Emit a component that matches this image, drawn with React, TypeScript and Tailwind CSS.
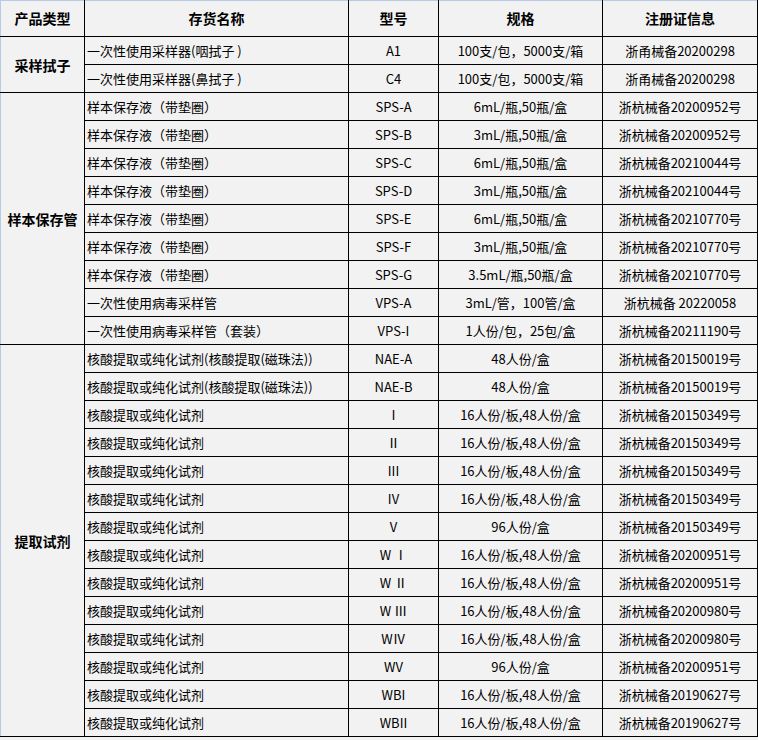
import React from 'react';

type Row = { name: string; model: string; spec: string; cert: string };
type Group = { type: string; rows: Row[] };

const swab = '一次性使用采样器';
const tube = '样本保存液（带垫圈）';
const reagent = '核酸提取或纯化试剂';
const plate = '16人份/板,48人份/盒';

const groups: Group[] = [
  {
    type: '采样拭子',
    rows: [
      { name: `${swab}(咽拭子 )`, model: 'A1', spec: '100支/包，5000支/箱', cert: '浙甬械备20200298' },
      { name: `${swab}(鼻拭子 )`, model: 'C4', spec: '100支/包，5000支/箱', cert: '浙甬械备20200298' },
    ],
  },
  {
    type: '样本保存管',
    rows: [
      { name: tube, model: 'SPS-A', spec: '6mL/瓶,50瓶/盒', cert: '浙杭械备20200952号' },
      { name: tube, model: 'SPS-B', spec: '3mL/瓶,50瓶/盒', cert: '浙杭械备20200952号' },
      { name: tube, model: 'SPS-C', spec: '6mL/瓶,50瓶/盒', cert: '浙杭械备20210044号' },
      { name: tube, model: 'SPS-D', spec: '3mL/瓶,50瓶/盒', cert: '浙杭械备20210044号' },
      { name: tube, model: 'SPS-E', spec: '6mL/瓶,50瓶/盒', cert: '浙杭械备20210770号' },
      { name: tube, model: 'SPS-F', spec: '3mL/瓶,50瓶/盒', cert: '浙杭械备20210770号' },
      { name: tube, model: 'SPS-G', spec: '3.5mL/瓶,50瓶/盒', cert: '浙杭械备20210770号' },
      { name: '一次性使用病毒采样管', model: 'VPS-A', spec: '3mL/管，100管/盒', cert: '浙杭械备 20220058' },
      { name: '一次性使用病毒采样管（套装）', model: 'VPS-I', spec: '1人份/包，25包/盒', cert: '浙杭械备20211190号' },
    ],
  },
  {
    type: '提取试剂',
    rows: [
      { name: `${reagent}(核酸提取(磁珠法))`, model: 'NAE-A', spec: '48人份/盒', cert: '浙杭械备20150019号' },
      { name: `${reagent}(核酸提取(磁珠法))`, model: 'NAE-B', spec: '48人份/盒', cert: '浙杭械备20150019号' },
      { name: reagent, model: 'Ⅰ', spec: plate, cert: '浙杭械备20150349号' },
      { name: reagent, model: 'Ⅱ', spec: plate, cert: '浙杭械备20150349号' },
      { name: reagent, model: 'III', spec: plate, cert: '浙杭械备20150349号' },
      { name: reagent, model: 'IV', spec: plate, cert: '浙杭械备20150349号' },
      { name: reagent, model: 'V', spec: '96人份/盒', cert: '浙杭械备20150349号' },
      { name: reagent, model: 'W Ⅰ', spec: plate, cert: '浙杭械备20200951号' },
      { name: reagent, model: 'W Ⅱ', spec: plate, cert: '浙杭械备20200951号' },
      { name: reagent, model: 'W Ⅲ', spec: plate, cert: '浙杭械备20200980号' },
      { name: reagent, model: 'WⅣ', spec: plate, cert: '浙杭械备20200980号' },
      { name: reagent, model: 'WV', spec: '96人份/盒', cert: '浙杭械备20200951号' },
      { name: reagent, model: 'WBI', spec: plate, cert: '浙杭械备20190627号' },
      { name: reagent, model: 'WBII', spec: plate, cert: '浙杭械备20190627号' },
    ],
  },
];

const headers = ['产品类型', '存货名称', '型号', '规格', '注册证信息'];

export default function App() {
  return (
    <div
      className="w-[758px] h-[740px] bg-[#f2f2f2] text-black overflow-hidden"
      style={{ fontFamily: '"Noto Sans CJK SC", "Noto Sans", sans-serif' }}
    >
      <table className="table-fixed border-collapse w-[757px]">
        <colgroup>
          <col className="w-[84px]" />
          <col className="w-[264px]" />
          <col className="w-[90px]" />
          <col className="w-[164px]" />
          <col className="w-[155px]" />
        </colgroup>
        <thead>
          <tr className="h-[36px]">
            {headers.map((h, i) => (
              <th
                key={h}
                className={`text-[14px] font-bold text-center border border-black border-t-[#b7cbe6] ${
                  i === 0 ? 'border-l-[#b7cbe6]' : ''
                }`}
              >
                {h}
              </th>
            ))}
          </tr>
        </thead>
        <tbody>
          {groups.map(group =>
            group.rows.map((row, idx) => (
              <tr key={`${group.type}-${idx}`} className="h-[28px] text-[13px] leading-none">
                {idx === 0 && (
                  <td
                    rowSpan={group.rows.length}
                    className="border border-black border-l-[#b7cbe6] text-[14px] font-bold text-center"
                  >
                    {group.type}
                  </td>
                )}
                <td className="border border-black px-[2px] whitespace-nowrap">{row.name}</td>
                <td className="border border-black text-center">{row.model}</td>
                <td className="border border-black text-center whitespace-nowrap">{row.spec}</td>
                <td className="border border-black text-center whitespace-nowrap">{row.cert}</td>
              </tr>
            ))
          )}
        </tbody>
      </table>
    </div>
  );
}
